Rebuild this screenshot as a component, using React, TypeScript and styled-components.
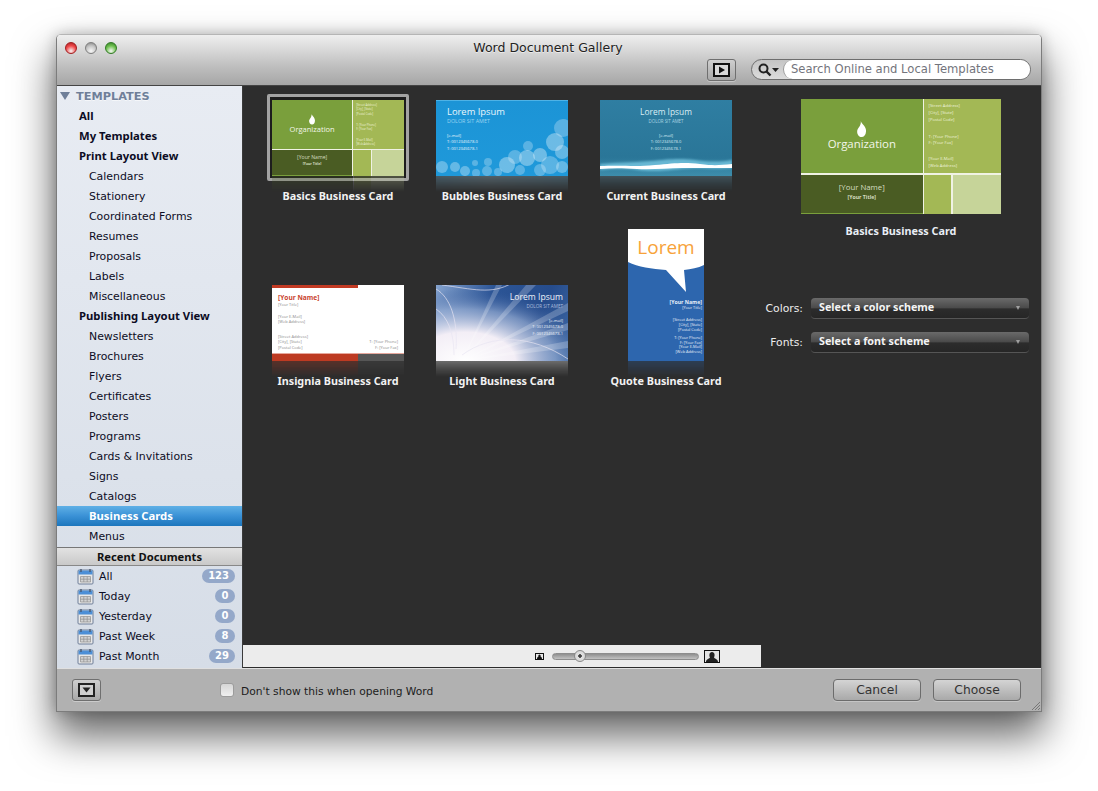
import styled, { createGlobalStyle } from "styled-components";

const boldFont = `"Noto Sans", "DejaVu Sans", sans-serif`;

const GlobalStyle = createGlobalStyle`
    html, body {
        margin: 0;
        padding: 0;
        background: #ffffff;
        font-family: "DejaVu Sans", "Liberation Sans", sans-serif;
    }
    #root {
        padding: 34px 56px 79px;
        width: 1098px;
        box-sizing: border-box;
    }
`;

const Window = styled.div`
    width: 986px;
    height: 678px;
    box-sizing: border-box;
    display: flex;
    flex-direction: column;
    position: relative;
    border-radius: 5px 5px 0 0;
    border: 1px solid #7c7c7c;
    border-top-color: #b5b5b5;
    box-shadow: 0 22px 40px 2px rgba(0, 0, 0, 0.6), 0 0 14px rgba(0, 0, 0, 0.22);
`;

const TitleBar = styled.div`
    height: 51px;
    flex: none;
    box-sizing: border-box;
    border-radius: 4px 4px 0 0;
    border-bottom: 1px solid #444;
    background: linear-gradient(#efefef 0%, #d8d8d8 30%, #bdbdbd 65%, #a6a6a6 100%);
    display: grid;
    grid-template-columns: 1fr auto 1fr;
    grid-template-rows: 24px 26px;
    padding: 0 10px 0 8px;
`;

const Lights = styled.div`
    display: flex;
    align-items: center;
    gap: 8px;
    padding-top: 1px;
`;

const Light = styled.span<{ $c: string; $d: string }>`
    width: 12px;
    height: 12px;
    border-radius: 50%;
    border: 1px solid ${({ $d }) => $d};
    box-sizing: border-box;
    background: radial-gradient(circle at 50% 80%, #ffffffcc 0%, ${({ $c }) => $c} 55%, ${({ $d }) => $d} 100%);
`;

const Title = styled.div`
    align-self: center;
    padding-top: 1px;
    font-size: 12.5px;
    color: #222;
    text-shadow: 0 1px 0 #ffffff88;
`;

const Tools = styled.div`
    grid-column: 1 / 4;
    display: flex;
    justify-content: flex-end;
    align-items: flex-start;
    gap: 15px;
`;

const IconButton = styled.div`
    width: 29px;
    height: 22px;
    box-sizing: border-box;
    border: 1px solid #6f6f6f;
    border-radius: 3px;
    background: linear-gradient(#cfcfcf, #a9a9a9);
    box-shadow: 0 1px 0 #ffffff55;
    display: flex;
    align-items: center;
    justify-content: center;
`;

const SearchBox = styled.div`
    width: 280px;
    height: 21px;
    box-sizing: border-box;
    border: 1px solid #6e6e6e;
    border-radius: 11px;
    background: linear-gradient(#c4c4c4, #dcdcdc);
    display: flex;
    align-items: center;
    padding-left: 6px;
`;

const SearchIcons = styled.div`
    width: 25px;
    flex: none;
    display: flex;
    align-items: center;
`;

const SearchField = styled.div`
    flex: 1;
    height: 19px;
    box-sizing: border-box;
    background: #ffffff;
    border-radius: 10px;
    border-left: 1px solid #999;
    padding-left: 7px;
    font-size: 11.6px;
    line-height: 19px;
    color: #73747c;
    white-space: nowrap;
`;

const Body = styled.div`
    flex: 1;
    min-height: 0;
    display: flex;
`;

const Sidebar = styled.div`
    width: 185px;
    flex: none;
    display: flex;
    flex-direction: column;
    background: linear-gradient(#e8ecf3, #d6dde7);
    border-right: 1px solid #3a3a3a;
`;

const SectionHead = styled.div`
    height: 20px;
    flex: none;
    display: flex;
    align-items: center;
    gap: 6px;
    padding-left: 3px;
    font-size: 11.3px;
    font-weight: 700;
    color: #6f7f99;
    text-shadow: 0 1px 0 #ffffff99;
`;

const Row = styled.div<{ $indent: number; $bold?: boolean; $active?: boolean }>`
    height: 20px;
    flex: none;
    padding-left: ${({ $indent }) => $indent}px;
    line-height: ${({ $bold, $active }) => ($bold || $active ? "19px" : "21px")};
    font-family: ${({ $bold, $active }) => ($bold || $active ? boldFont : "inherit")};
    font-size: ${({ $bold, $active }) => ($bold || $active ? "11.3px" : "10.9px")};
    font-weight: ${({ $bold, $active }) => ($bold || $active ? 700 : 400)};
    color: ${({ $active }) => ($active ? "#ffffff" : "#0c0c24")};
    white-space: nowrap;
    background: ${({ $active }) =>
        $active ? "linear-gradient(#5fb0e6 0%, #3a91d6 50%, #1c76bd 100%)" : "transparent"};
`;

const RecentHead = styled.div`
    margin-top: 1px;
    height: 19px;
    flex: none;
    box-sizing: border-box;
    border-top: 1px solid #777;
    border-bottom: 1px solid #888;
    background: linear-gradient(#e2e2e2, #c9c9c9);
    text-align: center;
    line-height: 18px;
    font-family: ${boldFont};
    font-size: 11.2px;
    font-weight: 700;
    color: #111;
`;

const RecentRow = styled.div`
    height: 20px;
    flex: none;
    display: flex;
    align-items: center;
    padding: 0 7px 0 20px;
    font-size: 10.9px;
    color: #0c0c24;
    gap: 5px;
`;

const RecentName = styled.span`
    flex: 1;
`;

const Badge = styled.span`
    height: 14px;
    min-width: 20px;
    padding: 0 6px;
    box-sizing: border-box;
    border-radius: 7px;
    background: #94a8c9;
    color: #ffffff;
    font-size: 10px;
    font-weight: 700;
    line-height: 14px;
    text-align: center;
`;

const Stage = styled.div`
    flex: 1;
    display: flex;
    background: #2d2d2d;
    min-width: 0;
`;

const Main = styled.div`
    width: 518px;
    flex: none;
    display: flex;
    flex-direction: column;
`;

const Gallery = styled.div`
    flex: 1;
    display: grid;
    grid-template-columns: repeat(3, 164px);
    grid-template-rows: 126px 185px;
    padding-left: 13px;
    align-content: start;
`;

const Cell = styled.div`
    display: flex;
    flex-direction: column;
    align-items: center;
    justify-content: flex-end;
`;

const Thumb = styled.div<{ $selected?: boolean }>`
    position: relative;
    display: flex;
    ${({ $selected }) =>
        $selected &&
        `
        &::before {
            content: "";
            position: absolute;
            inset: -6px -5px -5px -5px;
            border: 3px solid #a3a3a3;
            border-radius: 2px;
            background: #1d1d1d;
        }
    `}
`;

const Mirror = styled.div<{ $bg: string; $w: number }>`
    width: ${({ $w }) => $w}px;
    height: 16px;
    flex: none;
    background: ${({ $bg }) => $bg};
    -webkit-mask-image: linear-gradient(rgba(0, 0, 0, 0.3), transparent);
    mask-image: linear-gradient(rgba(0, 0, 0, 0.3), transparent);
`;

const CardName = styled.div`
    height: 13px;
    margin: -4px 0 10px;
    padding-top: 1px;
    position: relative;
    font-family: ${boldFont};
    font-size: 10.8px;
    line-height: 13px;
    font-weight: 700;
    color: #f2f2f2;
    white-space: nowrap;
`;

/* card sizing: --u is the px size of one unit on a card 100 units wide */
const Card = styled.div<{ $u: number; $w?: number; $h?: number }>`
    --u: ${({ $u }) => $u}px;
    position: relative;
    width: calc(var(--u) * ${({ $w }) => $w ?? 100});
    height: calc(var(--u) * ${({ $h }) => $h ?? 57.6});
    overflow: hidden;
    flex: none;
    font-family: "Open Sans", "DejaVu Sans", sans-serif;
`;

const BasicsGrid = styled(Card)`
    display: grid;
    grid-template-columns: 60.8% 1fr;
    grid-template-rows: 64.3% 1fr;
    gap: calc(var(--u) * 0.8);
    background: #f0f2e4;
`;

const OrgBlock = styled.div`
    background: #7a9f3c;
    display: flex;
    flex-direction: column;
    align-items: center;
    padding-top: calc(var(--u) * 10.8);
    color: #f3f6ea;
    font-size: calc(var(--u) * 5.7);
    line-height: 1.2;
`;

const Leaf = styled.svg`
    width: calc(var(--u) * 4.6);
    height: calc(var(--u) * 8);
    margin-bottom: calc(var(--u) * 0.2);
`;

const AddressBlock = styled.div`
    background: #a3b855;
    padding: calc(var(--u) * 2.2) 0 0 calc(var(--u) * 2.2);
    color: #edf2d9;
    font-size: calc(var(--u) * 2.1);
    line-height: calc(var(--u) * 3.4);
`;

const SmallGap = styled.div<{ $n: number }>`
    height: calc(var(--u) * ${({ $n }) => $n});
`;

const NameBlock = styled.div`
    background: #4a5c23;
    border-bottom: calc(var(--u) * 0.5) solid #7a9f3c;
    color: #d5dcc0;
    text-align: center;
    padding-top: calc(var(--u) * 3.6);
    font-size: calc(var(--u) * 3.9);
    line-height: calc(var(--u) * 5);
`;

const NameTitle = styled.div`
    font-size: calc(var(--u) * 2.6);
    font-weight: 700;
`;

const SwatchBlock = styled.div`
    display: grid;
    grid-template-columns: 1fr 1.8fr;
    gap: calc(var(--u) * 0.8);
`;

const Swatch = styled.div<{ $c: string }>`
    background: ${({ $c }) => $c};
`;

const ArtLayer = styled.svg`
    position: absolute;
    inset: 0;
    width: 100%;
    height: 100%;
`;

const CardCopy = styled.div<{ $align: string; $side: number; $c: string }>`
    position: relative;
    text-align: ${({ $align }) => $align};
    padding: 6px ${({ $side }) => $side}px 0;
    color: ${({ $c }) => $c};
`;

const CopyHead = styled.div<{ $size: number }>`
    font-size: ${({ $size }) => $size}px;
    line-height: 12px;
`;

const CopySub = styled.div<{ $c: string; $size: number }>`
    font-size: ${({ $size }) => $size}px;
    line-height: 7px;
    margin-bottom: 8px;
    color: ${({ $c }) => $c};
`;

const CopyLine = styled.div`
    font-size: 4px;
    line-height: 6.3px;
`;

const InsigniaCard = styled(Card)`
    background: #ffffff;
    display: flex;
    flex-direction: column;
    color: #8b8b8b;
    font-size: 4px;
    line-height: 5.2px;
`;

const RedBar = styled.div`
    width: 65.5%;
    height: 3px;
    flex: none;
    background: #c23a23;
`;

const InsigniaBody = styled.div`
    flex: 1;
    padding: 6px 6px 0;
    display: flex;
    flex-direction: column;
`;

const InsigniaName = styled.div`
    font-size: 6.6px;
    line-height: 8px;
    font-weight: 700;
    color: #c9432e;
`;

const InsigniaFoot = styled.div`
    display: flex;
    justify-content: space-between;
    align-items: flex-end;
    margin-top: 10px;
`;

const InsigniaRight = styled.div`
    text-align: right;
`;

const BottomBand = styled.div`
    height: 7px;
    flex: none;
    display: flex;
    border-top: 1px solid #e6a79c;
`;

const BandPart = styled.div<{ $c: string; $w: string }>`
    width: ${({ $w }) => $w};
    background: ${({ $c }) => $c};
`;

const QuoteCard = styled(Card)`
    background: #2d66ae;
    color: #e8eef8;
    text-align: right;
    font-size: 3.9px;
    line-height: 4.7px;
`;

const QuoteCopy = styled.div`
    position: relative;
    padding: 0 2px;
`;

const LoremWord = styled.div`
    text-align: center;
    font-size: 19px;
    line-height: 24px;
    padding-top: 6px;
    margin-bottom: 40px;
    color: #f7a239;
`;

const QuoteName = styled.div`
    font-size: 5.2px;
    line-height: 7px;
    font-weight: 700;
`;

const Preview = styled.div`
    flex: 1;
    display: flex;
    flex-direction: column;
    align-items: center;
    padding-top: 13px;
`;

const PreviewName = styled.div`
    margin: 10px 0 60px;
    font-family: ${boldFont};
    font-size: 10.8px;
    line-height: 14px;
    font-weight: 700;
    color: #e9eef5;
`;

const Options = styled.div`
    width: 100%;
    display: flex;
    flex-direction: column;
    gap: 13px;
`;

const OptionRow = styled.div`
    display: flex;
    align-items: center;
    gap: 8px;
`;

const OptionLabel = styled.div`
    width: 42px;
    text-align: right;
    font-size: 10.8px;
    color: #ececec;
`;

const SchemeSelect = styled.div`
    width: 218px;
    height: 21px;
    box-sizing: border-box;
    border-radius: 4px;
    border-bottom: 1px solid #555;
    background: linear-gradient(#6a6a6a 0%, #4b4b4b 48%, #2c2c2c 55%, #262626 100%);
    padding: 0 9px 2px 8px;
    display: flex;
    align-items: center;
    justify-content: space-between;
    font-family: ${boldFont};
    font-size: 10.75px;
    font-weight: 700;
    color: #f4f4f4;
`;

const ArrowDown = styled.span`
    width: 0;
    height: 0;
    margin-top: 2px;
    border-left: 2.5px solid transparent;
    border-right: 2.5px solid transparent;
    border-top: 4px solid #a0a0a0;
`;

const SliderBar = styled.div`
    height: 22px;
    margin-bottom: 1px;
    flex: none;
    background: #ececec;
    display: flex;
    align-items: center;
    gap: 8px;
    padding-left: 292px;
`;

const Track = styled.div`
    width: 147px;
    height: 7px;
    box-sizing: border-box;
    border: 1px solid #8d8d8d;
    border-radius: 4px;
    background: linear-gradient(#8f8f8f, #c2c2c2);
    position: relative;
    margin-right: -3px;
`;

const Knob = styled.div`
    position: absolute;
    left: 21px;
    top: -4px;
    width: 12px;
    height: 12px;
    box-sizing: border-box;
    border-radius: 50%;
    border: 1px solid #8a8a8a;
    background: radial-gradient(circle, #444 0 1.5px, #e2e2e2 2px, #d0d0d0 100%);
`;

const Footer = styled.div`
    height: 43px;
    flex: none;
    box-sizing: border-box;
    border-top: 1px solid #e0e0e0;
    background: #b1b1b1;
    display: flex;
    align-items: center;
    padding: 0 20px 0 15px;
    position: relative;
`;

const FooterCheck = styled.div`
    width: 14px;
    height: 14px;
    box-sizing: border-box;
    margin-left: 119px;
    border-radius: 3px;
    border: 1px solid #9c9c9c;
    background: linear-gradient(#d6d6d6, #f0f0f0);
`;

const FooterText = styled.div`
    margin: 2px 0 0 7px;
    flex: 1;
    font-size: 10.7px;
    color: #1c1c1c;
`;

const PushButton = styled.div`
    width: 88px;
    height: 22px;
    box-sizing: border-box;
    border: 1px solid #6c6c6c;
    border-radius: 4px;
    background: linear-gradient(#d4d4d4, #a9a9a9);
    box-shadow: 0 1px 0 #ffffff44;
    text-align: center;
    line-height: 20px;
    font-size: 12.3px;
    color: #333;
    & + & {
        margin-left: 12px;
    }
`;

const Grip = styled.svg`
    position: absolute;
    right: 0;
    bottom: 0;
    width: 11px;
    height: 11px;
`;

const printRows = ["Calendars", "Stationery", "Coordinated Forms", "Resumes", "Proposals", "Labels", "Miscellaneous"];
const publishRows = [
    "Newsletters",
    "Brochures",
    "Flyers",
    "Certificates",
    "Posters",
    "Programs",
    "Cards & Invitations",
    "Signs",
    "Catalogs",
    "Business Cards",
    "Menus",
];
const recents = [
    { name: "All", n: 123 },
    { name: "Today", n: 0 },
    { name: "Yesterday", n: 0 },
    { name: "Past Week", n: 8 },
    { name: "Past Month", n: 29 },
];

const CalendarIcon = () => (
    <svg width="17" height="17" viewBox="0 0 17 17">
        <rect x="1" y="2" width="15" height="14" rx="1" fill="#e8e8e8" stroke="#6f7f99" />
        <rect x="1.5" y="2.5" width="14" height="4" fill="#4d8fd6" />
        <path d="M4 1v3M13 1v3" stroke="#4a5a70" strokeWidth="1.4" />
        <path d="M3.5 8.5h10v5.5h-10zM3.5 11.2h10M6.8 8.5v5.5M10.2 8.5v5.5" fill="#d2d2d2" stroke="#8f8f8f" strokeWidth="0.7" />
    </svg>
);

const BasicsCard = ({ u }: { u: number }) => (
    <BasicsGrid $u={u}>
        <OrgBlock>
            <Leaf viewBox="0 0 10 18">
                <path d="M4 0c1 3 6 6 6 11 0 4-2 7-5 7-3 0-5-3-5-6 0-4 5-6 4-12z" fill="#ffffff" />
            </Leaf>
            Organization
        </OrgBlock>
        <AddressBlock>
            <div>[Street Address]</div>
            <div>[City], [State]</div>
            <div>[Postal Code]</div>
            <SmallGap $n={4.9} />
            <div>T: [Your Phone]</div>
            <div>F: [Your Fax]</div>
            <SmallGap $n={4.6} />
            <div>[Your E-Mail]</div>
            <div>[Web Address]</div>
        </AddressBlock>
        <NameBlock>
            [Your Name]
            <NameTitle>[Your Title]</NameTitle>
        </NameBlock>
        <SwatchBlock>
            <Swatch $c="#a3b855" />
            <Swatch $c="#c6d499" />
        </SwatchBlock>
    </BasicsGrid>
);

const bubbles: [number, number, number, number][] = [
    [127, 28, 9, 0.3], [119, 42, 9, 0.4], [126, 52, 7, 0.35], [92, 46, 5, 0.3], [104, 55, 7, 0.4],
    [91, 58, 8, 0.4], [79, 57, 7, 0.3], [71, 65, 8, 0.4], [52, 62, 4, 0.3], [39, 63, 3, 0.3],
    [19, 67, 5, 0.35], [6, 67, 6, 0.35], [51, 71, 5, 0.3], [29, 71, 5, 0.35], [114, 65, 9, 0.3],
    [104, 70, 6, 0.3], [126, 67, 6, 0.35], [84, 70, 5, 0.3], [62, 72, 4, 0.3], [40, 73, 4, 0.3],
];

const BubblesCard = () => (
    <Card $u={1.32} style={{ background: "linear-gradient(#67c2ee 0, #1c94d6 1.5px, #1f99da 100%)" }}>
        <ArtLayer viewBox="0 0 132 76" preserveAspectRatio="none">
            {bubbles.map(([x, y, r, o], i) => (
                <circle key={i} cx={x} cy={y} r={r} fill="#e4f3fb" opacity={o} />
            ))}
        </ArtLayer>
        <CardCopy $align="left" $side={11} $c="#eaf6fc">
            <CopyHead $size={9.4}>Lorem Ipsum</CopyHead>
            <CopySub $c="#9bd4f1" $size={5.4}>DOLOR SIT AMET</CopySub>
            <CopyLine>[e-mail]</CopyLine>
            <CopyLine>T: 0012345678-0</CopyLine>
            <CopyLine>T: 0012345678-1</CopyLine>
        </CardCopy>
    </Card>
);

const CurrentCard = () => (
    <Card $u={1.32} style={{ background: "linear-gradient(#2f7ea2, #2a7698 75%, #3d8dab 100%)" }}>
        <ArtLayer viewBox="0 0 132 76" preserveAspectRatio="none">
            <defs>
                <filter id="glow">
                    <feGaussianBlur stdDeviation="0.8" />
                </filter>
            </defs>
            <path d="M0 64c20-2 30-1 50-3s30-3 45-1 25 2 37 0v8c-20 2-30-1-50 1s-30 3-45 1-25-1-37 0z" fill="#7fd0ea" opacity="0.7" filter="url(#glow)" />
            <path d="M0 66c25-1 35 1 55-1s30-3 45-1 20 1 32 0v4c-20 0-35 0-50 0s-30 2-45 1-25-1-37 0z" fill="#ffffff" />
        </ArtLayer>
        <CardCopy $align="center" $side={0} $c="#dbeef5">
            <CopyHead $size={8.4}>Lorem Ipsum</CopyHead>
            <CopySub $c="#a9d3e2" $size={4.4}>DOLOR SIT AMET</CopySub>
            <CopyLine>[e-mail]</CopyLine>
            <CopyLine>T: 0012345678-0</CopyLine>
            <CopyLine>F: 0012345678-1</CopyLine>
        </CardCopy>
    </Card>
);

const Insignia = () => (
    <InsigniaCard $u={1.32}>
        <RedBar />
        <InsigniaBody>
            <InsigniaName>[Your Name]</InsigniaName>
            <div>[Your Title]</div>
            <SmallGap $n={5} />
            <div>[Your E-Mail]</div>
            <div>[Web Address]</div>
            <InsigniaFoot>
                <div>
                    <div>[Street Address]</div>
                    <div>[City], [State]</div>
                    <div>[Postal Code]</div>
                </div>
                <InsigniaRight>
                    <div>T: [Your Phone]</div>
                    <div>F: [Your Fax]</div>
                </InsigniaRight>
            </InsigniaFoot>
        </InsigniaBody>
        <BottomBand>
            <BandPart $c="#bd3a22" $w="65.5%" />
            <BandPart $c="#565656" $w="34.5%" />
        </BottomBand>
    </InsigniaCard>
);

const LightCard = () => (
    <Card $u={1.32} style={{ background: "linear-gradient(115deg, #86a4cf 0%, #2c5596 35%, #264c8c 70%, #3f6aa5 100%)" }}>
        <ArtLayer viewBox="0 0 132 76" preserveAspectRatio="none">
            <defs>
                <radialGradient id="burst" cx="0.22" cy="1" r="0.95">
                    <stop offset="0" stopColor="#ffffff" />
                    <stop offset="0.4" stopColor="#f3eef6" />
                    <stop offset="0.72" stopColor="#9fb4d8" stopOpacity="0.65" />
                    <stop offset="1" stopColor="#3a5f9f" stopOpacity="0" />
                </radialGradient>
            </defs>
            <rect width="132" height="76" fill="url(#burst)" />
            <path d="M26 76L132 18v8zM26 76L132 38v7zM26 76L90 0h10zM26 76L132 56v7zM26 76L60 0h6z" fill="#ffffff" opacity="0.22" />
            <path d="M0 4c14 8 22 30 20 60M6 0c30 4 50 10 70-2M26 70c30-22 70-20 106 4M0 24c12 8 18 24 18 46" fill="none" stroke="#e8e4f2" strokeWidth="0.8" opacity="0.85" />
        </ArtLayer>
        <CardCopy $align="right" $side={5} $c="#eef2fa">
            <CopyHead $size={8.6}>Lorem Ipsum</CopyHead>
            <CopySub $c="#aebedd" $size={4.6}>DOLOR SIT AMET</CopySub>
            <CopyLine>[e-mail]</CopyLine>
            <CopyLine>T: 0012345678-0</CopyLine>
            <CopyLine>F: 0012345678-1</CopyLine>
        </CardCopy>
    </Card>
);

const Quote = () => (
    <QuoteCard $u={0.76} $h={173.7}>
        <ArtLayer viewBox="0 0 76 132" preserveAspectRatio="none">
            <path d="M0 0h76v36c-6 3-13 4-20 5l2 22L38 41C24 40 10 38 0 33z" fill="#ffffff" />
        </ArtLayer>
        <QuoteCopy>
            <LoremWord>Lorem</LoremWord>
            <QuoteName>[Your Name]</QuoteName>
            <div>[Your Title]</div>
            <SmallGap $n={10} />
            <div>[Street Address]</div>
            <div>[City], [State]</div>
            <div>[Postal Code]</div>
            <SmallGap $n={4.5} />
            <div>T: [Your Phone]</div>
            <div>F: [Your Fax]</div>
            <div>[Your E-Mail]</div>
            <div>[Web Address]</div>
        </QuoteCopy>
    </QuoteCard>
);

const gallery = [
    {
        name: "Basics Business Card",
        art: <BasicsCard u={1.32} />,
        w: 132,
        selected: true,
        mirror: "linear-gradient(90deg, #4a5c23 0 61%, #e0e0e0 61% 62%, #a3b855 62% 75%, #c6d499 75%)",
    },
    {
        name: "Bubbles Business Card",
        art: <BubblesCard />,
        w: 132,
        mirror: "linear-gradient(90deg, #7cc4ea, #a7d8f2 40%, #7cc4ea)",
    },
    {
        name: "Current Business Card",
        art: <CurrentCard />,
        w: 132,
        mirror: "linear-gradient(#6fa9c1, #2a7698)",
    },
    {
        name: "Insignia Business Card",
        art: <Insignia />,
        w: 132,
        mirror: "linear-gradient(90deg, #bd3a22 0 65.5%, #565656 65.5%)",
    },
    {
        name: "Light Business Card",
        art: <LightCard />,
        w: 132,
        mirror: "linear-gradient(#ffffff, #c9c9c9)",
    },
    {
        name: "Quote Business Card",
        art: <Quote />,
        w: 76,
        mirror: "#2d66ae",
    },
];

const App = () => {
    return (
        <>
            <GlobalStyle />
            <Window>
                <TitleBar>
                    <Lights>
                        <Light $c="#f0494a" $d="#a11c1e" />
                        <Light $c="#c4c4c4" $d="#7f7f7f" />
                        <Light $c="#6fc04f" $d="#2f7a22" />
                    </Lights>
                    <Title>Word Document Gallery</Title>
                    <div />
                    <Tools>
                        <IconButton>
                            <svg width="17" height="14" viewBox="0 0 17 14">
                                <rect x="1" y="1" width="15" height="12" fill="#d8d8d8" stroke="#111" strokeWidth="2" />
                                <path d="M6 3.5v7l6-3.5z" fill="#111" />
                            </svg>
                        </IconButton>
                        <SearchBox>
                            <SearchIcons>
                                <svg width="22" height="14" viewBox="0 0 22 14">
                                    <circle cx="5.5" cy="5.5" r="4" fill="none" stroke="#222" strokeWidth="2" />
                                    <path d="M8.5 8.5l4 4" stroke="#222" strokeWidth="2.4" />
                                    <path d="M14 5h7l-3.5 4z" fill="#222" />
                                </svg>
                            </SearchIcons>
                            <SearchField>Search Online and Local Templates</SearchField>
                        </SearchBox>
                    </Tools>
                </TitleBar>
                <Body>
                    <Sidebar>
                        <SectionHead>
                            <svg width="10" height="8" viewBox="0 0 10 8">
                                <path d="M0 0h10L5 8z" fill="#6f7f99" />
                            </svg>
                            TEMPLATES
                        </SectionHead>
                        <Row $indent={22} $bold>All</Row>
                        <Row $indent={22} $bold>My Templates</Row>
                        <Row $indent={22} $bold>Print Layout View</Row>
                        {printRows.map((r) => (
                            <Row key={r} $indent={32}>{r}</Row>
                        ))}
                        <Row $indent={22} $bold>Publishing Layout View</Row>
                        {publishRows.map((r) => (
                            <Row key={r} $indent={32} $active={r === "Business Cards"}>{r}</Row>
                        ))}
                        <RecentHead>Recent Documents</RecentHead>
                        {recents.map((r) => (
                            <RecentRow key={r.name}>
                                <CalendarIcon />
                                <RecentName>{r.name}</RecentName>
                                <Badge>{r.n}</Badge>
                            </RecentRow>
                        ))}
                    </Sidebar>
                    <Stage>
                        <Main>
                            <Gallery>
                                {gallery.map((g) => (
                                    <Cell key={g.name}>
                                        <Thumb $selected={g.selected}>{g.art}</Thumb>
                                        <Mirror $bg={g.mirror} $w={g.w} />
                                        <CardName>{g.name}</CardName>
                                    </Cell>
                                ))}
                            </Gallery>
                            <SliderBar>
                                <svg width="9" height="7" viewBox="0 0 9 7">
                                    <rect x="0.5" y="0.5" width="8" height="6" fill="#e8e8e8" stroke="#111" />
                                    <path d="M2 6c0-2 1-2 1.5-2.5a1.2 1.2 0 1 1 2 0C6 4 7 4 7 6z" fill="#111" />
                                </svg>
                                <Track>
                                    <Knob />
                                </Track>
                                <svg width="16" height="13" viewBox="0 0 16 13">
                                    <rect x="0.5" y="0.5" width="15" height="12" fill="#e4e4e4" stroke="#111" />
                                    <path d="M2 12c0-3 3-3 4-4.5C5 6 5 2 8 2s3 4 2 5.5c1 1.5 4 1.5 4 4.5z" fill="#222" />
                                </svg>
                            </SliderBar>
                        </Main>
                        <Preview>
                            <BasicsCard u={2} />
                            <PreviewName>Basics Business Card</PreviewName>
                            <Options>
                                <OptionRow>
                                    <OptionLabel>Colors:</OptionLabel>
                                    <SchemeSelect>
                                        Select a color scheme
                                        <ArrowDown />
                                    </SchemeSelect>
                                </OptionRow>
                                <OptionRow>
                                    <OptionLabel>Fonts:</OptionLabel>
                                    <SchemeSelect>
                                        Select a font scheme
                                        <ArrowDown />
                                    </SchemeSelect>
                                </OptionRow>
                            </Options>
                        </Preview>
                    </Stage>
                </Body>
                <Footer>
                    <IconButton>
                        <svg width="17" height="14" viewBox="0 0 17 14">
                            <rect x="1" y="1" width="15" height="12" fill="#d0d0d0" stroke="#222" strokeWidth="2" />
                            <path d="M4.5 4.5h8l-4 5z" fill="#222" />
                        </svg>
                    </IconButton>
                    <FooterCheck />
                    <FooterText>Don't show this when opening Word</FooterText>
                    <PushButton>Cancel</PushButton>
                    <PushButton>Choose</PushButton>
                    <Grip viewBox="0 0 11 11">
                        <path d="M10 2l-8 8M10 5l-5 5M10 8l-2 2" stroke="#777" strokeWidth="1" />
                    </Grip>
                </Footer>
            </Window>
        </>
    );
};

export default App;
